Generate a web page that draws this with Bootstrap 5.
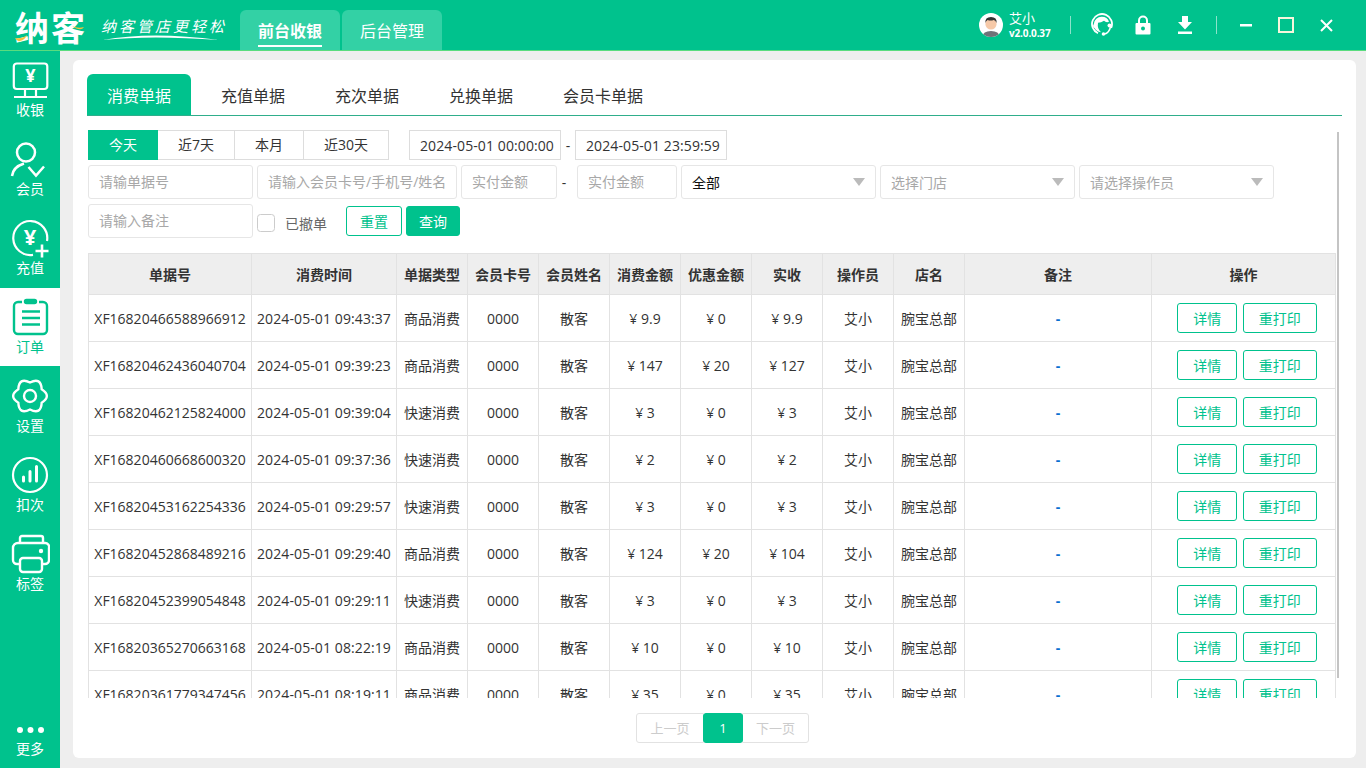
<!DOCTYPE html>
<html lang="zh-CN">
<head>
<meta charset="utf-8">
<title>纳客</title>
<link href="https://cdn.jsdelivr.net/npm/bootstrap@5.3.0/dist/css/bootstrap.min.css" rel="stylesheet">
<style>
:root{--g:#00c28d;}
html,body{height:768px;overflow:hidden;}
body{font-family:"Open Sans","Noto Sans CJK SC",sans-serif;font-size:14px;color:#333;background:#eee;}
.topbar{height:51px;background:var(--g);border-bottom:1px solid #5adc7e;color:#fff;flex:none;}
.logo{width:240px;padding-left:15px;height:50px;}
.logo-mark{font-family:"Noto Sans CJK SC",sans-serif;font-weight:700;font-size:34px;line-height:54px;letter-spacing:2px;width:86px;position:relative;white-space:nowrap;}
.logo-swoosh{position:absolute;left:0;top:0;}
.slogan{position:relative;width:126px;height:50px;font-family:"Noto Sans CJK SC",sans-serif;font-style:italic;font-size:15px;line-height:52px;letter-spacing:3px;white-space:nowrap;}
.slogan svg{position:absolute;left:0;top:32px;}
.top-tab{width:100px;height:40px;margin-top:10px;margin-right:2px;background:#33d1a5;border-radius:6px 6px 0 0;color:#fff;font-size:16px;line-height:42px;text-align:center;text-decoration:none;display:block;}
.top-tab.active span{display:inline-block;font-weight:700;line-height:28px;border-bottom:2px solid #fff;}
.top-right{height:50px;}
.avatar{margin-right:6px;}
.user-box{width:61px;}
.user-name{font-size:13px;line-height:16px;}
.user-ver{font-size:10px;font-weight:700;line-height:14px;letter-spacing:-.15px;}
.v-div{width:1px;height:18px;background:rgba(255,255,255,.55);}
.i-head{margin-left:20px;}
.i-lock{margin-left:22px;}
.i-down{margin-left:26px;}
.v-div.second{margin-left:23px;}
.i-min{margin-left:23px;}
.i-max{margin-left:26px;}
.i-close{margin-left:26px;margin-right:33px;}
.side{width:60px;background:var(--g);flex:none;height:717px;}
.side-item{height:79px;color:#fff;font-size:14px;line-height:18px;text-decoration:none;padding-top:9px;text-align:center;display:block;}
.side-item svg{display:block;margin:0 auto 1px;}
.side-item.active{background:#fff;color:var(--g);height:78px;}
.side-item.active ~ .side-item{padding-top:10px;}
.side-item.side-more{margin-top:auto;height:46px;padding-top:4px!important;}
.side-item.side-more svg{margin-bottom:6px;}
.content{background:#eee;padding:9px 10px 10px 13px;}
.panel-main{background:#fff;border-radius:6px;height:698px;padding:14px 14px 0 14px;}
.doc-tabs{height:42px;border-bottom:1px solid #2fae8b;margin:0;padding:0;list-style:none;}
.doc-tabs a{display:block;padding:0 25px;height:41px;color:#333;font-size:16px;line-height:44px;text-align:center;text-decoration:none;}
.doc-tabs li:first-child a{width:104px;padding:0;margin-right:5px;background:var(--g);color:#fff;border-radius:6px 6px 0 0;}
.scroll{height:568px;margin-top:14px;overflow:hidden;padding-left:1px;position:relative;}
.thumb{position:absolute;left:1250px;top:2px;width:2px;height:546px;background:#c4c4c4;}
.f-row{gap:4px;margin-bottom:5px;}
.f-row.tight{gap:0;}
.range{width:321px;}
.range .btn{height:30px;padding:0;line-height:28px;font-size:14px;color:#333;background:#fff;border:1px solid #ddd;border-radius:0;flex:none;width:78px;}
.range .btn.r-a{width:70px;}.range .btn.r-c{width:70px;}.range .btn.r-d{width:86px;}
.range .btn.active{background:var(--g);border-color:var(--g);color:#fff;}
.date-in{width:152px;height:30px;border:1px solid #ddd;padding:0 0 0 10px;font-size:14px;letter-spacing:.1px;color:#333;outline:none;}
.date-sep{width:14px;text-align:center;}
.amt-sep{width:8px;margin-right:5px;margin-left:-1px;text-align:center;}
.fc{height:34px;width:165px;border:1px solid #e6e6e6;border-radius:3px;padding:0 10px;font-size:14px;color:#333;flex:none;}
input.fc{padding-bottom:2px;}
.fc::placeholder{color:#a8a8a8;opacity:1;}
.fc.sel{width:195px;color:#a8a8a8;background-image:url("data:image/svg+xml,%3Csvg xmlns='http://www.w3.org/2000/svg' width='12' height='8'%3E%3Cpath d='M0 0h12L6 8z' fill='%23bbb'/%3E%3C/svg%3E");background-position:right 10px center;background-size:12px 8px;}
.fc.sel.dark{color:#111;}
.w-member{width:200px;}.w-amt1{width:96px;}.w-amt2{width:100px;}
.chk{width:18px;height:18px;margin:4px 0 0;border:1px solid #ccc;border-radius:3px;flex:none;}
.chk-label{color:#666;margin:5px 0 0 6px;width:57px;}
.btn-o,.btn-s{height:30px;padding:1px 0 0;font-size:14px;border-radius:3px;line-height:27px;}
.btn-o{color:var(--g);background:#fff;border:1px solid var(--g);}
.btn-s{color:#fff;background:var(--g);border:1px solid var(--g);}
.t-wrap{margin-top:15px;width:1248px;}
.data{width:1247px;table-layout:fixed;margin:0;border-color:#e2e2e2;--bs-table-border-color:#e2e2e2;color:#333;}
.data col{width:71px;}
.data col:nth-child(1){width:163px;}
.data col:nth-child(2){width:145px;}
.data col:nth-child(11){width:187px;}
.data col:nth-child(12){width:184px;}
.table.data>*>*>*{padding:0;height:47px;vertical-align:middle;text-align:center;white-space:nowrap;color:#333;}
.table.data>thead>tr>th{height:41px;background:#eee;font-weight:700;--bs-table-bg:#eee;}
.data td:nth-child(2){letter-spacing:.1px;}
.table.data>tbody>tr>td:last-child{padding-left:7px;}
.table.data>tbody>tr>td.dash{color:#0a6fd0;font-weight:700;}
.w60{width:60px;}.w74{width:74px;margin-left:2px;}.w56{width:56px;}.w54{width:54px;}
.pager{margin:15px 0 0 549px;--bs-pagination-border-radius:3px;}
.pager .page-link{height:30px;padding:0;line-height:28px;font-size:13px;text-align:center;border-color:#e2e2e2;color:#ccc;background:#fff;}
.pager .page-item.p1 .page-link{width:68px;}
.pager .page-item.p2 .page-link{width:67px;}
.pager .page-item.active .page-link{width:40px;background:var(--g);border-color:var(--g);color:#fff;border-radius:3px;}
</style>
</head>
<body class="d-flex flex-column">
<header class="topbar d-flex align-items-start">
  <div class="logo d-flex">
    <div class="logo-mark">纳客
      <svg class="logo-swoosh" width="86" height="50"><path d="M0 38q7 1 12-3q-2 5-7 6q-3 1-5-3z" fill="#f6c23c"/><path d="M57 26q6 3 12 1q-3 5-12-1z" fill="#f6c23c"/></svg>
    </div>
    <div class="slogan">纳客管店更轻松
      <svg width="126" height="12"><path d="M2 8Q50-1 118 8Q50 3 2 8z" fill="#fff"/></svg>
    </div>
  </div>
  <a class="top-tab active" href="#"><span>前台收银</span></a>
  <a class="top-tab" href="#">后台管理</a>
  <div class="top-right ms-auto d-flex align-items-center">
    <svg class="avatar" width="24" height="24" viewBox="0 0 24 24"><defs><clipPath id="av"><circle cx="12" cy="12" r="12"/></clipPath></defs><circle cx="12" cy="12" r="12" fill="#fff"/><g clip-path="url(#av)"><path d="M3 24q1-6 9-6t9 6z" fill="#6f7278"/><circle cx="12" cy="11" r="5.6" fill="#f6c9a8"/><path d="M6.4 10q-.6-6 5.6-6t5.6 6q-1.200-3-3-3q-3 1-6 0q-1.600 1-2.200 3z" fill="#333"/></g></svg>
    <div class="user-box">
      <div class="user-name">艾小</div>
      <div class="user-ver">v2.0.0.37</div>
    </div>
    <span class="v-div"></span>
    <svg class="i-head" width="22" height="24" viewBox="0 0 22 24"><path d="M20.200 15A10 10 0 1 0 7 20.200" fill="none" stroke="#fff" stroke-width="1.800"/><path d="M11 3.800a7.400 7.400 0 0 1 7 5q-3 1-5-1q-3 2-6 2q-1 6 3 9.500a7.500 7.500 0 0 1 1-15.500z" fill="#fff"/><circle cx="4" cy="13" r="2" fill="#fff"/><circle cx="18.500" cy="12.500" r="2" fill="#fff"/><path d="M19.500 14q-1.500 6-6 7" fill="none" stroke="#fff" stroke-width="1.500"/><circle cx="12.500" cy="21" r="1.800" fill="#fff"/></svg>
    <svg class="i-lock" width="16" height="20" viewBox="0 0 16 20"><path d="M4 9V5.500a4 4 0 0 1 8 0V9" fill="none" stroke="#fff" stroke-width="2"/><path d="M1.500 8h13a1 1 0 0 1 1 1v9.500a1 1 0 0 1-1 1h-13a1 1 0 0 1-1-1V9a1 1 0 0 1 1-1z" fill="#fff"/><circle cx="8" cy="13.500" r="2" fill="#00c28d"/></svg>
    <svg class="i-down" width="16" height="20" viewBox="0 0 16 20"><path d="M5 1h6v6h4l-7 7.500L1 7h4zM1 16.500h14v2.500H1z" fill="#fff"/></svg>
    <span class="v-div second"></span>
    <svg class="i-min" width="12" height="3" viewBox="0 0 12 3"><rect width="12" height="2.500" fill="#fff"/></svg>
    <svg class="i-max" width="16" height="16" viewBox="0 0 16 16"><rect x="1" y="1" width="14" height="14" fill="none" stroke="#f6f6dc" stroke-width="2"/></svg>
    <svg class="i-close" width="13" height="13" viewBox="0 0 13 13"><path d="M1 1l11 11M12 1L1 12" stroke="#fff" stroke-width="2"/></svg>
  </div>
</header>
<div class="d-flex flex-grow-1">
  <nav class="side d-flex flex-column">
    <a class="side-item" href="#">
      <svg width="40" height="40" viewBox="0 0 40 40" fill="none" stroke="#fff" stroke-width="2.200"><rect x="3.800" y="3.500" width="33.500" height="25.500" rx="3"/><path d="M4 37h33M15 29v8M26 29v8"/><text x="20.500" y="22" text-anchor="middle" font-size="18" font-weight="700" fill="#fff" stroke="none" font-family="Open Sans">¥</text></svg>收银</a>
    <a class="side-item" href="#">
      <svg width="40" height="40" viewBox="0 0 40 40" fill="none" stroke="#fff" stroke-width="2.500"><circle cx="16" cy="13.500" r="9"/><path d="M2 37q1-9 12-12.500M18.500 28l7.500 8.500 8-9"/></svg>会员</a>
    <a class="side-item" href="#">
      <svg width="40" height="40" viewBox="0 0 40 40" fill="none" stroke="#fff" stroke-width="2.200"><path d="M37 23A17 17 0 1 0 23 36.800"/><path d="M32 26.500v13M25.500 33h13" stroke-width="2.600"/><text x="20" y="27" text-anchor="middle" font-size="22" font-weight="700" fill="#fff" stroke="none" font-family="Open Sans">¥</text></svg>充值</a>
    <a class="side-item active" href="#">
      <svg width="40" height="40" viewBox="0 0 40 40" fill="none" stroke="#00c28d" stroke-width="2.400"><path d="M12 5H8a4 4 0 0 0-4 4v24a4 4 0 0 0 4 4h25a4 4 0 0 0 4-4V9a4 4 0 0 0-4-4h-4"/><rect x="15" y="3" width="11" height="3" rx="1.500" fill="#00c28d"/><path d="M12 14.500h18M12 21h18M12 27.500h18"/></svg>订单</a>
    <a class="side-item" href="#">
      <svg width="40" height="40" viewBox="0 0 40 40" fill="none" stroke="#fff" stroke-width="2.400"><path d="M31.700 13.250Q42 20 31.700 26.750Q31 39.050 20 33.500Q9 39.050 8.300 26.750Q-2 20 8.300 13.250Q9 .95 20 6.500Q31 .95 31.700 13.250Z"/><circle cx="20" cy="20" r="6"/></svg>设置</a>
    <a class="side-item" href="#">
      <svg width="40" height="40" viewBox="0 0 40 40" fill="none" stroke="#fff" stroke-width="2.200"><circle cx="20" cy="20" r="17"/><path d="M13.500 22v4M20 16.500V26M26.500 11.500V26" stroke-width="3" stroke-linecap="round"/></svg>扣次</a>
    <a class="side-item" href="#">
      <svg width="40" height="40" viewBox="0 0 40 40" fill="none" stroke="#fff" stroke-width="2.400"><path d="M10 9V4a2 2 0 0 1 2-2h19a2 2 0 0 1 2 2v5"/><path d="M10 30H7a4 4 0 0 1-4-4V14a5 5 0 0 1 5-5h27a4 4 0 0 1 4 5v12a4 4 0 0 1-4 4h-3"/><rect x="10" y="24" width="22" height="14" rx="3"/><circle cx="31" cy="17" r="2.200" fill="#fff" stroke="none"/></svg>标签</a>
    <a class="side-item side-more" href="#">
      <svg width="40" height="8" viewBox="0 0 40 8" fill="#fff"><circle cx="10" cy="4" r="3"/><circle cx="20.500" cy="4" r="3"/><circle cx="31" cy="4" r="3"/></svg>更多</a>
  </nav>
  <main class="content flex-grow-1">
    <div class="panel-main">
      <ul class="doc-tabs d-flex">
        <li><a href="#">消费单据</a></li>
        <li><a href="#">充值单据</a></li>
        <li><a href="#">充次单据</a></li>
        <li><a href="#">兑换单据</a></li>
        <li><a href="#">会员卡单据</a></li>
      </ul>
      <div class="scroll">
        <span class="thumb"></span>
        <div class="d-flex align-items-center f-row tight">
          <div class="btn-group range">
            <button class="btn active r-a">今天</button>
            <button class="btn">近7天</button>
            <button class="btn r-c">本月</button>
            <button class="btn r-d">近30天</button>
          </div>
          <input class="date-in" value="2024-05-01 00:00:00">
          <span class="date-sep">-</span>
          <input class="date-in" value="2024-05-01 23:59:59">
        </div>
        <div class="d-flex align-items-center f-row">
          <input class="form-control fc" placeholder="请输单据号">
          <input class="form-control fc w-member" placeholder="请输入会员卡号/手机号/姓名">
          <input class="form-control fc w-amt1" placeholder="实付金额">
          <span class="amt-sep">-</span>
          <input class="form-control fc w-amt2" placeholder="实付金额">
          <select class="form-select fc sel dark"><option>全部</option></select>
          <select class="form-select fc sel"><option>选择门店</option></select>
          <select class="form-select fc sel"><option>请选择操作员</option></select>
        </div>
        <div class="d-flex align-items-center f-row">
          <input class="form-control fc" placeholder="请输入备注">
          <input class="form-check-input chk" type="checkbox">
          <span class="chk-label">已撤单</span>
          <button class="btn btn-o w56">重置</button>
          <button class="btn btn-s w54">查询</button>
        </div>
        <div class="t-wrap">
          <table class="table table-bordered data">
            <colgroup><col><col><col><col><col><col><col><col><col><col><col><col></colgroup>
            <thead><tr><th>单据号</th><th>消费时间</th><th>单据类型</th><th>会员卡号</th><th>会员姓名</th><th>消费金额</th><th>优惠金额</th><th>实收</th><th>操作员</th><th>店名</th><th>备注</th><th>操作</th></tr></thead>
            <tbody>
              <tr><td>XF16820466588966912</td><td>2024-05-01 09:43:37</td><td>商品消费</td><td>0000</td><td>散客</td><td>¥ 9.9</td><td>¥ 0</td><td>¥ 9.9</td><td>艾小</td><td>腕宝总部</td><td class="dash">-</td><td><button class="btn btn-o w60">详情</button> <button class="btn btn-o w74">重打印</button></td></tr>
              <tr><td>XF16820462436040704</td><td>2024-05-01 09:39:23</td><td>商品消费</td><td>0000</td><td>散客</td><td>¥ 147</td><td>¥ 20</td><td>¥ 127</td><td>艾小</td><td>腕宝总部</td><td class="dash">-</td><td><button class="btn btn-o w60">详情</button> <button class="btn btn-o w74">重打印</button></td></tr>
              <tr><td>XF16820462125824000</td><td>2024-05-01 09:39:04</td><td>快速消费</td><td>0000</td><td>散客</td><td>¥ 3</td><td>¥ 0</td><td>¥ 3</td><td>艾小</td><td>腕宝总部</td><td class="dash">-</td><td><button class="btn btn-o w60">详情</button> <button class="btn btn-o w74">重打印</button></td></tr>
              <tr><td>XF16820460668600320</td><td>2024-05-01 09:37:36</td><td>快速消费</td><td>0000</td><td>散客</td><td>¥ 2</td><td>¥ 0</td><td>¥ 2</td><td>艾小</td><td>腕宝总部</td><td class="dash">-</td><td><button class="btn btn-o w60">详情</button> <button class="btn btn-o w74">重打印</button></td></tr>
              <tr><td>XF16820453162254336</td><td>2024-05-01 09:29:57</td><td>快速消费</td><td>0000</td><td>散客</td><td>¥ 3</td><td>¥ 0</td><td>¥ 3</td><td>艾小</td><td>腕宝总部</td><td class="dash">-</td><td><button class="btn btn-o w60">详情</button> <button class="btn btn-o w74">重打印</button></td></tr>
              <tr><td>XF16820452868489216</td><td>2024-05-01 09:29:40</td><td>商品消费</td><td>0000</td><td>散客</td><td>¥ 124</td><td>¥ 20</td><td>¥ 104</td><td>艾小</td><td>腕宝总部</td><td class="dash">-</td><td><button class="btn btn-o w60">详情</button> <button class="btn btn-o w74">重打印</button></td></tr>
              <tr><td>XF16820452399054848</td><td>2024-05-01 09:29:11</td><td>快速消费</td><td>0000</td><td>散客</td><td>¥ 3</td><td>¥ 0</td><td>¥ 3</td><td>艾小</td><td>腕宝总部</td><td class="dash">-</td><td><button class="btn btn-o w60">详情</button> <button class="btn btn-o w74">重打印</button></td></tr>
              <tr><td>XF16820365270663168</td><td>2024-05-01 08:22:19</td><td>商品消费</td><td>0000</td><td>散客</td><td>¥ 10</td><td>¥ 0</td><td>¥ 10</td><td>艾小</td><td>腕宝总部</td><td class="dash">-</td><td><button class="btn btn-o w60">详情</button> <button class="btn btn-o w74">重打印</button></td></tr>
              <tr><td>XF16820361779347456</td><td>2024-05-01 08:19:11</td><td>商品消费</td><td>0000</td><td>散客</td><td>¥ 35</td><td>¥ 0</td><td>¥ 35</td><td>艾小</td><td>腕宝总部</td><td class="dash">-</td><td><button class="btn btn-o w60">详情</button> <button class="btn btn-o w74">重打印</button></td></tr>
            </tbody>
          </table>
        </div>
      </div>
      <ul class="pagination pager mb-0">
        <li class="page-item p1 disabled"><a class="page-link" href="#">上一页</a></li>
        <li class="page-item active"><a class="page-link" href="#">1</a></li>
        <li class="page-item p2 disabled"><a class="page-link" href="#">下一页</a></li>
      </ul>
    </div>
  </main>
</div>
<script src="https://cdn.jsdelivr.net/npm/bootstrap@5.3.0/dist/js/bootstrap.bundle.min.js"></script>
</body>
</html>
